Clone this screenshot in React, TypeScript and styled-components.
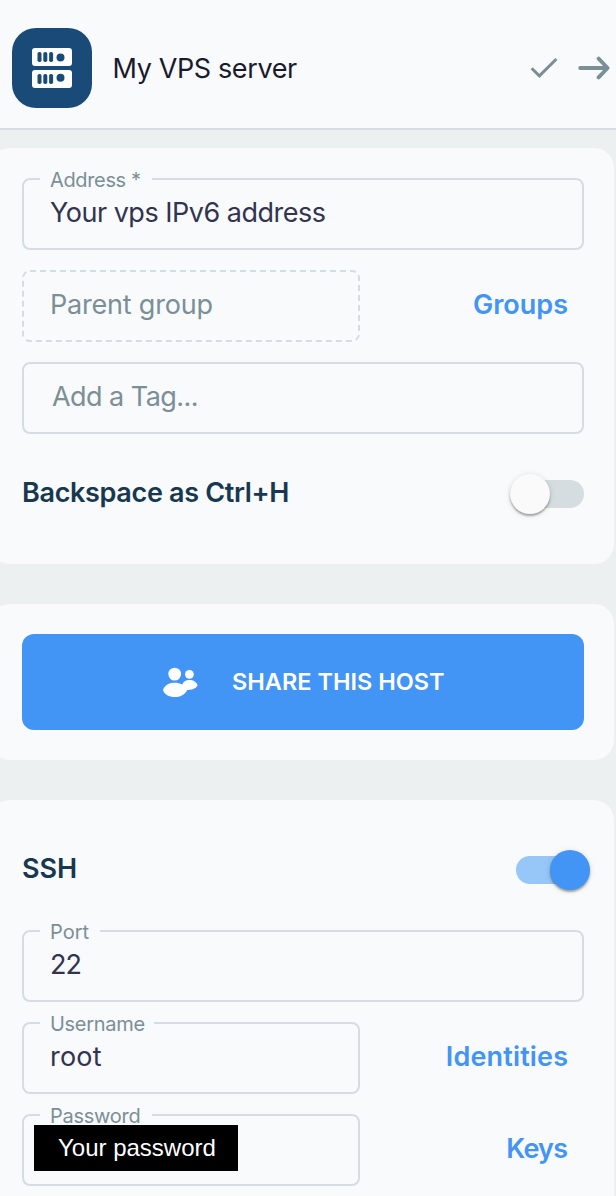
import React from "react";
import styled, { createGlobalStyle } from "styled-components";

const GlobalStyle = createGlobalStyle`
  *, *::before, *::after { box-sizing: border-box; }
  body {
    margin: 0;
    height: 1196px;
    overflow: hidden;
    background: #ecf0f1;
    font-family: Inter, "Liberation Sans", sans-serif;
  }
`;

const Screen = styled.main`
  width: 616px;
  height: 1196px;
  overflow: hidden;
`;

const Header = styled.header`
  display: flex;
  height: 130px;
  padding: 28px 5px 0 12px;
  background: #f8fafc;
  border-bottom: 2px solid #d5dde1;
`;

const HostIcon = styled.div`
  display: flex;
  align-items: center;
  justify-content: center;
  width: 80px;
  height: 80px;
  border-radius: 24px;
  background: #1a4b78;
`;

const Title = styled.h1<{ $spacing: number }>`
  flex: 1;
  margin: 0 0 0 20.5px;
  color: #1a1a2e;
  font-size: 27px;
  font-weight: 400;
  line-height: 82px;
  letter-spacing: ${(p) => p.$spacing}px;
  white-space: nowrap;
`;

const HeaderActions = styled.div`
  display: flex;
  align-items: center;
  gap: 20px;
  height: 80px;
`;

const Panel = styled.section<{ $top: number; $bottom: number }>`
  width: 624px;
  margin: 0 0 40px -10px;
  padding: ${(p) => p.$top}px 30px ${(p) => p.$bottom}px 32px;
  border-radius: 20px;
  background: #f8fafc;
`;

const Content = styled.div`
  padding-top: 18px;
`;

const FieldStack = styled.div`
  display: flex;
  flex-direction: column;
  gap: 20px;
`;

const FieldRow = styled.div`
  display: flex;
  justify-content: space-between;
  padding-right: 16px;
`;

const Field = styled.div<{ $narrow?: boolean }>`
  position: relative;
  width: ${(p) => (p.$narrow ? "338px" : "100%")};
  height: 72px;
  padding: 0 26px;
  border: 2px solid #d5dde1;
  border-radius: 8px;
`;

const DashedField = styled.div`
  position: relative;
  width: 338px;
  height: 72px;
  padding: 2px 28px;
`;

const DashedOutline = styled.svg`
  position: absolute;
  inset: 0;
`;

const Label = styled.label<{ $width: number; $spacing: number }>`
  position: absolute;
  top: -12px;
  left: 16px;
  width: ${(p) => p.$width}px;
  padding-left: 10px;
  background: #f8fafc;
  color: #7b8f97;
  font-size: 20px;
  line-height: 24px;
  letter-spacing: ${(p) => p.$spacing}px;
  white-space: nowrap;
`;

const Value = styled.span<{ $muted?: boolean; $spacing: number; $indent?: number }>`
  display: block;
  padding-left: ${(p) => p.$indent ?? 0}px;
  color: ${(p) => (p.$muted ? "#7b8f97" : "#32344f")};
  font-size: 27px;
  line-height: 66px;
  letter-spacing: ${(p) => p.$spacing}px;
  white-space: nowrap;
`;

const LinkButton = styled.button<{ $spacing: number }>`
  padding: 0;
  border: 0;
  height: 70px;
  background: none;
  color: #4294f5;
  font: 600 27px/70px Inter, sans-serif;
  letter-spacing: ${(p) => p.$spacing}px;
  margin-right: ${(p) => -p.$spacing}px;
`;

const SwitchRow = styled.div<{ $before?: number; $after?: number }>`
  display: flex;
  justify-content: space-between;
  height: 40px;
  margin: ${(p) => p.$before ?? 0}px 0 ${(p) => p.$after ?? 0}px;
`;

const SwitchLabel = styled.span<{ $spacing: number }>`
  color: #17384f;
  font-size: 27px;
  font-weight: 600;
  line-height: 38px;
  letter-spacing: ${(p) => p.$spacing}px;
`;

const Track = styled.span<{ $on?: boolean }>`
  position: relative;
  width: 68px;
  height: 28px;
  margin-top: 6px;
  border-radius: 14px;
  background: ${(p) => (p.$on ? "#97c6f9" : "#d5dde1")};

  &::after {
    content: "";
    position: absolute;
    top: -6px;
    left: ${(p) => (p.$on ? 34 : -6)}px;
    width: 40px;
    height: 40px;
    border-radius: 50%;
    background: ${(p) => (p.$on ? "#4294f5" : "#fafafa")};
    box-shadow: 0 2px 2px rgba(0, 0, 0, 0.3), 0 1px 6px rgba(0, 0, 0, 0.12);
  }
`;

const ShareButton = styled.button`
  display: flex;
  align-items: center;
  width: 100%;
  height: 96px;
  padding: 0 0 0 140px;
  border: 0;
  border-radius: 12px;
  background: #4294f5;
  color: #fff;
  font: 600 23.5px/30px Inter, sans-serif;
`;

const ShareText = styled.span`
  margin-left: 34px;
  white-space: nowrap;
`;

const PasswordHint = styled.span`
  position: absolute;
  top: 9px;
  left: 10px;
  width: 204px;
  height: 46px;
  padding-left: 24px;
  background: #000;
  color: #fff;
  font: 24px/45px "Liberation Sans", sans-serif;
  white-space: nowrap;
`;

const ServerGlyph = () => (
  <svg width="40" height="40" viewBox="0 0 40 40">
    {[0, 22].map((y) => (
      <g key={y} transform={`translate(0 ${y})`}>
        <rect width="40" height="18" rx="3" fill="#fff" />
        <g fill="#1a4b78">
          <rect x="5.5" y="4" width="4" height="10" rx="1.8" />
          <rect x="11.3" y="4" width="4" height="10" rx="1.8" />
          <rect x="17.1" y="4" width="4" height="10" rx="1.8" />
          <circle cx="28.5" cy={y ? 7.8 : 9.4} r="4" />
        </g>
      </g>
    ))}
  </svg>
);

const CheckGlyph = () => (
  <svg width="28" height="22" viewBox="0 0 28 22" fill="none" stroke="#7b8f97" strokeWidth="3">
    <path d="M1.6 11.2 L9.4 18.8 L26.4 2" />
  </svg>
);

const ArrowGlyph = () => (
  <svg width="33" height="24" viewBox="0 0 33 24" fill="none" stroke="#7b8f97" strokeWidth="3.8" strokeLinecap="round" strokeLinejoin="round">
    <path d="M2.2 12 H29 M20.6 2.6 L29.6 12 L20.6 21.4" />
  </svg>
);

const PeopleGlyph = () => (
  <svg width="36" height="30" viewBox="0 0 36 30" fill="#fff">
    <circle cx="12.7" cy="7.1" r="6.4" />
    <circle cx="27.4" cy="7.3" r="4.4" />
    <path d="M1 23 C2.2 18.3 7 15.7 12.5 15.7 C15.5 15.7 18 16.3 20.2 17.4 C21.5 14.3 24 13 27.3 13 C31.5 13 34.5 15 35.6 18.3 C34.2 21.3 30.5 23.2 25.2 22.9 C23 27.6 18.5 30 12.8 30 C7 30 2.4 27.4 1 23 Z" />
  </svg>
);

export default function App() {
  return (
    <Screen>
      <GlobalStyle />
      <Header>
        <HostIcon><ServerGlyph /></HostIcon>
        <Title $spacing={-0.37}>My VPS server</Title>
        <HeaderActions>
          <CheckGlyph />
          <ArrowGlyph />
        </HeaderActions>
      </Header>
      <Content>
        <Panel $top={30} $bottom={50}>
          <FieldStack>
            <Field>
              <Label $width={112} $spacing={-0.35}>Address *</Label>
              <Value $spacing={-0.5}>Your vps IPv6 address</Value>
            </Field>
            <FieldRow>
              <DashedField>
                <DashedOutline width="338" height="72" fill="none" stroke="#d5dde1" strokeWidth="2">
                  <rect x="1" y="1" width="336" height="70" rx="7" strokeDasharray="6 4" />
                </DashedOutline>
                <Value $muted $spacing={-0.2}>Parent group</Value>
              </DashedField>
              <LinkButton $spacing={0}>Groups</LinkButton>
            </FieldRow>
            <Field>
              <Value $muted $spacing={-0.55} $indent={2}>Add a Tag...</Value>
            </Field>
          </FieldStack>
          <SwitchRow $before={40}>
            <SwitchLabel $spacing={-0.33}>Backspace as Ctrl+H</SwitchLabel>
            <Track />
          </SwitchRow>
        </Panel>
        <Panel $top={30} $bottom={30}>
          <ShareButton>
            <PeopleGlyph />
            <ShareText>SHARE THIS HOST</ShareText>
          </ShareButton>
        </Panel>
        <Panel $top={50} $bottom={40}>
          <SwitchRow $after={40}>
            <SwitchLabel $spacing={0}>SSH</SwitchLabel>
            <Track $on />
          </SwitchRow>
          <FieldStack>
            <Field>
              <Label $width={60} $spacing={0}>Port</Label>
              <Value $spacing={-1}>22</Value>
            </Field>
            <FieldRow>
              <Field $narrow>
                <Label $width={114} $spacing={-0.3}>Username</Label>
                <Value $spacing={0.2}>root</Value>
              </Field>
              <LinkButton $spacing={0.15}>Identities</LinkButton>
            </FieldRow>
            <FieldRow>
              <Field $narrow>
                <Label $width={112} $spacing={-0.25}>Password</Label>
                <PasswordHint>Your password</PasswordHint>
              </Field>
              <LinkButton $spacing={-0.8}>Keys</LinkButton>
            </FieldRow>
          </FieldStack>
        </Panel>
      </Content>
    </Screen>
  );
}
